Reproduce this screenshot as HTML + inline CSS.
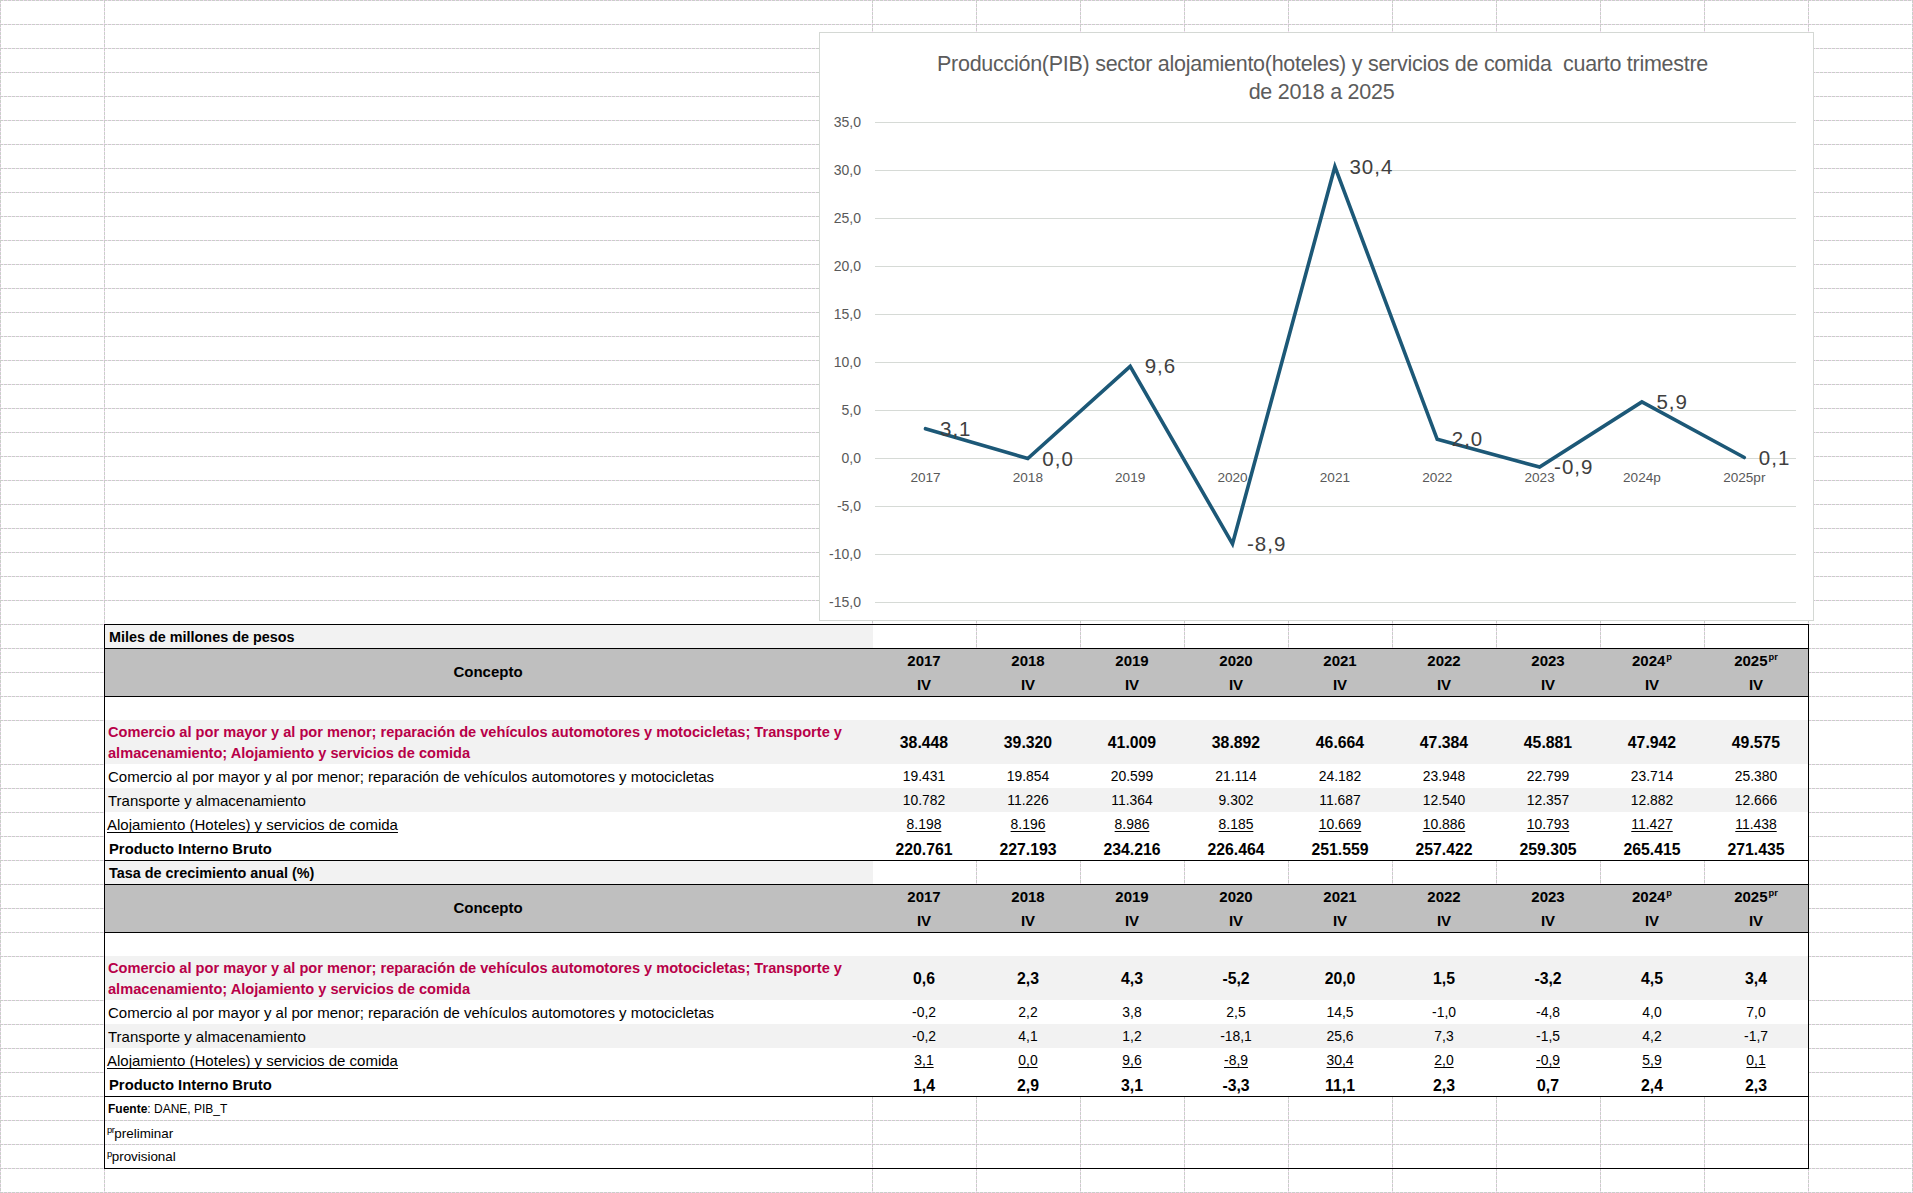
<!DOCTYPE html><html><head><meta charset="utf-8"><style>
html,body{margin:0;padding:0;background:#fff;} body{width:1913px;height:1193px;position:relative;overflow:hidden;font-family:"Liberation Sans", sans-serif;color:#000;}
div{position:absolute;}
.t{white-space:pre;}
.hl{height:1px;background:repeating-linear-gradient(90deg,#c9cfc9 0 3px,#f4d6f4 3px 4px);}
.vl{width:1px;background:repeating-linear-gradient(180deg,#c9cfc9 0 3px,#f4d6f4 3px 4px);}
.b{background:#000;}
.u{text-decoration:underline;text-decoration-thickness:1px;text-underline-offset:2px;text-decoration-skip-ink:none;}
</style></head><body>
<div class="hl" style="left:0;top:0px;width:1913px"></div>
<div class="hl" style="left:0;top:24px;width:1913px"></div>
<div class="hl" style="left:0;top:48px;width:1913px"></div>
<div class="hl" style="left:0;top:72px;width:1913px"></div>
<div class="hl" style="left:0;top:96px;width:1913px"></div>
<div class="hl" style="left:0;top:120px;width:1913px"></div>
<div class="hl" style="left:0;top:144px;width:1913px"></div>
<div class="hl" style="left:0;top:168px;width:1913px"></div>
<div class="hl" style="left:0;top:192px;width:1913px"></div>
<div class="hl" style="left:0;top:216px;width:1913px"></div>
<div class="hl" style="left:0;top:240px;width:1913px"></div>
<div class="hl" style="left:0;top:264px;width:1913px"></div>
<div class="hl" style="left:0;top:288px;width:1913px"></div>
<div class="hl" style="left:0;top:312px;width:1913px"></div>
<div class="hl" style="left:0;top:336px;width:1913px"></div>
<div class="hl" style="left:0;top:360px;width:1913px"></div>
<div class="hl" style="left:0;top:384px;width:1913px"></div>
<div class="hl" style="left:0;top:408px;width:1913px"></div>
<div class="hl" style="left:0;top:432px;width:1913px"></div>
<div class="hl" style="left:0;top:456px;width:1913px"></div>
<div class="hl" style="left:0;top:480px;width:1913px"></div>
<div class="hl" style="left:0;top:504px;width:1913px"></div>
<div class="hl" style="left:0;top:528px;width:1913px"></div>
<div class="hl" style="left:0;top:552px;width:1913px"></div>
<div class="hl" style="left:0;top:576px;width:1913px"></div>
<div class="hl" style="left:0;top:600px;width:1913px"></div>
<div class="hl" style="left:0;top:624px;width:1913px"></div>
<div class="hl" style="left:0;top:648px;width:1913px"></div>
<div class="hl" style="left:0;top:672px;width:1913px"></div>
<div class="hl" style="left:0;top:696px;width:1913px"></div>
<div class="hl" style="left:0;top:720px;width:1913px"></div>
<div class="hl" style="left:0;top:764px;width:1913px"></div>
<div class="hl" style="left:0;top:788px;width:1913px"></div>
<div class="hl" style="left:0;top:812px;width:1913px"></div>
<div class="hl" style="left:0;top:836px;width:1913px"></div>
<div class="hl" style="left:0;top:860px;width:1913px"></div>
<div class="hl" style="left:0;top:884px;width:1913px"></div>
<div class="hl" style="left:0;top:908px;width:1913px"></div>
<div class="hl" style="left:0;top:932px;width:1913px"></div>
<div class="hl" style="left:0;top:956px;width:1913px"></div>
<div class="hl" style="left:0;top:1000px;width:1913px"></div>
<div class="hl" style="left:0;top:1024px;width:1913px"></div>
<div class="hl" style="left:0;top:1048px;width:1913px"></div>
<div class="hl" style="left:0;top:1072px;width:1913px"></div>
<div class="hl" style="left:0;top:1096px;width:1913px"></div>
<div class="hl" style="left:0;top:1120px;width:1913px"></div>
<div class="hl" style="left:0;top:1144px;width:1913px"></div>
<div class="hl" style="left:0;top:1168px;width:1913px"></div>
<div class="hl" style="left:0;top:1192px;width:1913px"></div>
<div class="vl" style="left:0px;top:0;height:1193px"></div>
<div class="vl" style="left:104px;top:0;height:1193px"></div>
<div class="vl" style="left:872px;top:0;height:1193px"></div>
<div class="vl" style="left:976px;top:0;height:1193px"></div>
<div class="vl" style="left:1080px;top:0;height:1193px"></div>
<div class="vl" style="left:1184px;top:0;height:1193px"></div>
<div class="vl" style="left:1288px;top:0;height:1193px"></div>
<div class="vl" style="left:1392px;top:0;height:1193px"></div>
<div class="vl" style="left:1496px;top:0;height:1193px"></div>
<div class="vl" style="left:1600px;top:0;height:1193px"></div>
<div class="vl" style="left:1704px;top:0;height:1193px"></div>
<div class="vl" style="left:1808px;top:0;height:1193px"></div>
<div class="vl" style="left:1912px;top:0;height:1193px"></div>
<style>sup{font-size:62%;vertical-align:0;position:relative;top:-0.68em;margin-left:1px;} sup.s2{font-size:70%;top:-0.5em;letter-spacing:-0.5px;margin-left:0}</style>
<div style="left:104px;top:624px;width:769px;height:24px;background:#f2f2f2;"></div>
<div style="left:104px;top:648px;width:1704px;height:48px;background:#bfbfbf;"></div>
<div style="left:104px;top:696px;width:1704px;height:24px;background:#fff;"></div>
<div style="left:104px;top:720px;width:1704px;height:44px;background:#f2f2f2;"></div>
<div style="left:104px;top:764px;width:1704px;height:24px;background:#fff;"></div>
<div style="left:104px;top:788px;width:1704px;height:24px;background:#f2f2f2;"></div>
<div style="left:104px;top:812px;width:1704px;height:48px;background:#fff;"></div>
<div class="t" style="left:109px;top:629.61px;font-size:14.4px;line-height:14.4px;font-weight:bold;color:#000;">Miles de millones de pesos</div>
<div class="t" style="left:104px;top:664.10px;font-size:15px;line-height:15px;font-weight:bold;color:#000;width:768px;text-align:center;">Concepto</div>
<div class="t" style="left:872px;top:652.90px;font-size:15px;line-height:15px;font-weight:bold;color:#000;width:104px;text-align:center;">2017</div>
<div class="t" style="left:872px;top:676.80px;font-size:15px;line-height:15px;font-weight:bold;color:#000;width:104px;text-align:center;">IV</div>
<div class="t" style="left:976px;top:652.90px;font-size:15px;line-height:15px;font-weight:bold;color:#000;width:104px;text-align:center;">2018</div>
<div class="t" style="left:976px;top:676.80px;font-size:15px;line-height:15px;font-weight:bold;color:#000;width:104px;text-align:center;">IV</div>
<div class="t" style="left:1080px;top:652.90px;font-size:15px;line-height:15px;font-weight:bold;color:#000;width:104px;text-align:center;">2019</div>
<div class="t" style="left:1080px;top:676.80px;font-size:15px;line-height:15px;font-weight:bold;color:#000;width:104px;text-align:center;">IV</div>
<div class="t" style="left:1184px;top:652.90px;font-size:15px;line-height:15px;font-weight:bold;color:#000;width:104px;text-align:center;">2020</div>
<div class="t" style="left:1184px;top:676.80px;font-size:15px;line-height:15px;font-weight:bold;color:#000;width:104px;text-align:center;">IV</div>
<div class="t" style="left:1288px;top:652.90px;font-size:15px;line-height:15px;font-weight:bold;color:#000;width:104px;text-align:center;">2021</div>
<div class="t" style="left:1288px;top:676.80px;font-size:15px;line-height:15px;font-weight:bold;color:#000;width:104px;text-align:center;">IV</div>
<div class="t" style="left:1392px;top:652.90px;font-size:15px;line-height:15px;font-weight:bold;color:#000;width:104px;text-align:center;">2022</div>
<div class="t" style="left:1392px;top:676.80px;font-size:15px;line-height:15px;font-weight:bold;color:#000;width:104px;text-align:center;">IV</div>
<div class="t" style="left:1496px;top:652.90px;font-size:15px;line-height:15px;font-weight:bold;color:#000;width:104px;text-align:center;">2023</div>
<div class="t" style="left:1496px;top:676.80px;font-size:15px;line-height:15px;font-weight:bold;color:#000;width:104px;text-align:center;">IV</div>
<div class="t" style="left:1600px;top:652.90px;font-size:15px;line-height:15px;font-weight:bold;color:#000;width:104px;text-align:center;">2024<sup>p</sup></div>
<div class="t" style="left:1600px;top:676.80px;font-size:15px;line-height:15px;font-weight:bold;color:#000;width:104px;text-align:center;">IV</div>
<div class="t" style="left:1704px;top:652.90px;font-size:15px;line-height:15px;font-weight:bold;color:#000;width:104px;text-align:center;">2025<sup>pr</sup></div>
<div class="t" style="left:1704px;top:676.80px;font-size:15px;line-height:15px;font-weight:bold;color:#000;width:104px;text-align:center;">IV</div>
<div class="t" style="left:108px;top:724.94px;font-size:14.6px;line-height:14.6px;font-weight:bold;color:#b80048;">Comercio al por mayor y al por menor; reparación de vehículos automotores y motocicletas; Transporte y</div>
<div class="t" style="left:108px;top:746.24px;font-size:14.6px;line-height:14.6px;font-weight:bold;color:#b80048;">almacenamiento; Alojamiento y servicios de comida</div>
<div class="t" style="left:108px;top:768.90px;font-size:15px;line-height:15px;font-weight:normal;color:#000;">Comercio al por mayor y al por menor; reparación de vehículos automotores y motocicletas</div>
<div class="t" style="left:108px;top:792.90px;font-size:15px;line-height:15px;font-weight:normal;color:#000;">Transporte y almacenamiento</div>
<div class="t u" style="left:107px;top:816.90px;font-size:15px;line-height:15px;font-weight:normal;color:#000;">Alojamiento (Hoteles) y servicios de comida</div>
<div class="t" style="left:109px;top:841.87px;font-size:14.8px;line-height:14.8px;font-weight:bold;color:#000;">Producto Interno Bruto</div>
<div class="t" style="left:872px;top:734.93px;font-size:15.8px;line-height:15.8px;font-weight:bold;color:#000;width:104px;text-align:center;">38.448</div>
<div class="t" style="left:872px;top:769.83px;font-size:13.9px;line-height:13.9px;font-weight:normal;color:#000;width:104px;text-align:center;">19.431</div>
<div class="t" style="left:872px;top:793.83px;font-size:13.9px;line-height:13.9px;font-weight:normal;color:#000;width:104px;text-align:center;">10.782</div>
<div style="left:872px;top:812px;width:104px;height:24px;text-align:center"><span class="t u" style="position:absolute;left:50%;transform:translateX(-50%);top:5.83px;font-size:13.9px;line-height:13.9px">8.198</span></div>
<div class="t" style="left:872px;top:841.63px;font-size:15.8px;line-height:15.8px;font-weight:bold;color:#000;width:104px;text-align:center;">220.761</div>
<div class="t" style="left:976px;top:734.93px;font-size:15.8px;line-height:15.8px;font-weight:bold;color:#000;width:104px;text-align:center;">39.320</div>
<div class="t" style="left:976px;top:769.83px;font-size:13.9px;line-height:13.9px;font-weight:normal;color:#000;width:104px;text-align:center;">19.854</div>
<div class="t" style="left:976px;top:793.83px;font-size:13.9px;line-height:13.9px;font-weight:normal;color:#000;width:104px;text-align:center;">11.226</div>
<div style="left:976px;top:812px;width:104px;height:24px;text-align:center"><span class="t u" style="position:absolute;left:50%;transform:translateX(-50%);top:5.83px;font-size:13.9px;line-height:13.9px">8.196</span></div>
<div class="t" style="left:976px;top:841.63px;font-size:15.8px;line-height:15.8px;font-weight:bold;color:#000;width:104px;text-align:center;">227.193</div>
<div class="t" style="left:1080px;top:734.93px;font-size:15.8px;line-height:15.8px;font-weight:bold;color:#000;width:104px;text-align:center;">41.009</div>
<div class="t" style="left:1080px;top:769.83px;font-size:13.9px;line-height:13.9px;font-weight:normal;color:#000;width:104px;text-align:center;">20.599</div>
<div class="t" style="left:1080px;top:793.83px;font-size:13.9px;line-height:13.9px;font-weight:normal;color:#000;width:104px;text-align:center;">11.364</div>
<div style="left:1080px;top:812px;width:104px;height:24px;text-align:center"><span class="t u" style="position:absolute;left:50%;transform:translateX(-50%);top:5.83px;font-size:13.9px;line-height:13.9px">8.986</span></div>
<div class="t" style="left:1080px;top:841.63px;font-size:15.8px;line-height:15.8px;font-weight:bold;color:#000;width:104px;text-align:center;">234.216</div>
<div class="t" style="left:1184px;top:734.93px;font-size:15.8px;line-height:15.8px;font-weight:bold;color:#000;width:104px;text-align:center;">38.892</div>
<div class="t" style="left:1184px;top:769.83px;font-size:13.9px;line-height:13.9px;font-weight:normal;color:#000;width:104px;text-align:center;">21.114</div>
<div class="t" style="left:1184px;top:793.83px;font-size:13.9px;line-height:13.9px;font-weight:normal;color:#000;width:104px;text-align:center;">9.302</div>
<div style="left:1184px;top:812px;width:104px;height:24px;text-align:center"><span class="t u" style="position:absolute;left:50%;transform:translateX(-50%);top:5.83px;font-size:13.9px;line-height:13.9px">8.185</span></div>
<div class="t" style="left:1184px;top:841.63px;font-size:15.8px;line-height:15.8px;font-weight:bold;color:#000;width:104px;text-align:center;">226.464</div>
<div class="t" style="left:1288px;top:734.93px;font-size:15.8px;line-height:15.8px;font-weight:bold;color:#000;width:104px;text-align:center;">46.664</div>
<div class="t" style="left:1288px;top:769.83px;font-size:13.9px;line-height:13.9px;font-weight:normal;color:#000;width:104px;text-align:center;">24.182</div>
<div class="t" style="left:1288px;top:793.83px;font-size:13.9px;line-height:13.9px;font-weight:normal;color:#000;width:104px;text-align:center;">11.687</div>
<div style="left:1288px;top:812px;width:104px;height:24px;text-align:center"><span class="t u" style="position:absolute;left:50%;transform:translateX(-50%);top:5.83px;font-size:13.9px;line-height:13.9px">10.669</span></div>
<div class="t" style="left:1288px;top:841.63px;font-size:15.8px;line-height:15.8px;font-weight:bold;color:#000;width:104px;text-align:center;">251.559</div>
<div class="t" style="left:1392px;top:734.93px;font-size:15.8px;line-height:15.8px;font-weight:bold;color:#000;width:104px;text-align:center;">47.384</div>
<div class="t" style="left:1392px;top:769.83px;font-size:13.9px;line-height:13.9px;font-weight:normal;color:#000;width:104px;text-align:center;">23.948</div>
<div class="t" style="left:1392px;top:793.83px;font-size:13.9px;line-height:13.9px;font-weight:normal;color:#000;width:104px;text-align:center;">12.540</div>
<div style="left:1392px;top:812px;width:104px;height:24px;text-align:center"><span class="t u" style="position:absolute;left:50%;transform:translateX(-50%);top:5.83px;font-size:13.9px;line-height:13.9px">10.886</span></div>
<div class="t" style="left:1392px;top:841.63px;font-size:15.8px;line-height:15.8px;font-weight:bold;color:#000;width:104px;text-align:center;">257.422</div>
<div class="t" style="left:1496px;top:734.93px;font-size:15.8px;line-height:15.8px;font-weight:bold;color:#000;width:104px;text-align:center;">45.881</div>
<div class="t" style="left:1496px;top:769.83px;font-size:13.9px;line-height:13.9px;font-weight:normal;color:#000;width:104px;text-align:center;">22.799</div>
<div class="t" style="left:1496px;top:793.83px;font-size:13.9px;line-height:13.9px;font-weight:normal;color:#000;width:104px;text-align:center;">12.357</div>
<div style="left:1496px;top:812px;width:104px;height:24px;text-align:center"><span class="t u" style="position:absolute;left:50%;transform:translateX(-50%);top:5.83px;font-size:13.9px;line-height:13.9px">10.793</span></div>
<div class="t" style="left:1496px;top:841.63px;font-size:15.8px;line-height:15.8px;font-weight:bold;color:#000;width:104px;text-align:center;">259.305</div>
<div class="t" style="left:1600px;top:734.93px;font-size:15.8px;line-height:15.8px;font-weight:bold;color:#000;width:104px;text-align:center;">47.942</div>
<div class="t" style="left:1600px;top:769.83px;font-size:13.9px;line-height:13.9px;font-weight:normal;color:#000;width:104px;text-align:center;">23.714</div>
<div class="t" style="left:1600px;top:793.83px;font-size:13.9px;line-height:13.9px;font-weight:normal;color:#000;width:104px;text-align:center;">12.882</div>
<div style="left:1600px;top:812px;width:104px;height:24px;text-align:center"><span class="t u" style="position:absolute;left:50%;transform:translateX(-50%);top:5.83px;font-size:13.9px;line-height:13.9px">11.427</span></div>
<div class="t" style="left:1600px;top:841.63px;font-size:15.8px;line-height:15.8px;font-weight:bold;color:#000;width:104px;text-align:center;">265.415</div>
<div class="t" style="left:1704px;top:734.93px;font-size:15.8px;line-height:15.8px;font-weight:bold;color:#000;width:104px;text-align:center;">49.575</div>
<div class="t" style="left:1704px;top:769.83px;font-size:13.9px;line-height:13.9px;font-weight:normal;color:#000;width:104px;text-align:center;">25.380</div>
<div class="t" style="left:1704px;top:793.83px;font-size:13.9px;line-height:13.9px;font-weight:normal;color:#000;width:104px;text-align:center;">12.666</div>
<div style="left:1704px;top:812px;width:104px;height:24px;text-align:center"><span class="t u" style="position:absolute;left:50%;transform:translateX(-50%);top:5.83px;font-size:13.9px;line-height:13.9px">11.438</span></div>
<div class="t" style="left:1704px;top:841.63px;font-size:15.8px;line-height:15.8px;font-weight:bold;color:#000;width:104px;text-align:center;">271.435</div>
<div style="left:104px;top:624px;width:1705px;height:1px;background:#000;"></div>
<div style="left:104px;top:648px;width:1705px;height:1px;background:#000;"></div>
<div style="left:104px;top:696px;width:1705px;height:1px;background:#000;"></div>
<div style="left:104px;top:624px;width:1px;height:236px;background:#000;"></div>
<div style="left:1808px;top:624px;width:1px;height:236px;background:#000;"></div>
<div style="left:104px;top:860px;width:769px;height:24px;background:#f2f2f2;"></div>
<div style="left:104px;top:884px;width:1704px;height:48px;background:#bfbfbf;"></div>
<div style="left:104px;top:932px;width:1704px;height:24px;background:#fff;"></div>
<div style="left:104px;top:956px;width:1704px;height:44px;background:#f2f2f2;"></div>
<div style="left:104px;top:1000px;width:1704px;height:24px;background:#fff;"></div>
<div style="left:104px;top:1024px;width:1704px;height:24px;background:#f2f2f2;"></div>
<div style="left:104px;top:1048px;width:1704px;height:48px;background:#fff;"></div>
<div class="t" style="left:109px;top:865.61px;font-size:14.4px;line-height:14.4px;font-weight:bold;color:#000;">Tasa de crecimiento anual (%)</div>
<div class="t" style="left:104px;top:900.10px;font-size:15px;line-height:15px;font-weight:bold;color:#000;width:768px;text-align:center;">Concepto</div>
<div class="t" style="left:872px;top:888.90px;font-size:15px;line-height:15px;font-weight:bold;color:#000;width:104px;text-align:center;">2017</div>
<div class="t" style="left:872px;top:912.80px;font-size:15px;line-height:15px;font-weight:bold;color:#000;width:104px;text-align:center;">IV</div>
<div class="t" style="left:976px;top:888.90px;font-size:15px;line-height:15px;font-weight:bold;color:#000;width:104px;text-align:center;">2018</div>
<div class="t" style="left:976px;top:912.80px;font-size:15px;line-height:15px;font-weight:bold;color:#000;width:104px;text-align:center;">IV</div>
<div class="t" style="left:1080px;top:888.90px;font-size:15px;line-height:15px;font-weight:bold;color:#000;width:104px;text-align:center;">2019</div>
<div class="t" style="left:1080px;top:912.80px;font-size:15px;line-height:15px;font-weight:bold;color:#000;width:104px;text-align:center;">IV</div>
<div class="t" style="left:1184px;top:888.90px;font-size:15px;line-height:15px;font-weight:bold;color:#000;width:104px;text-align:center;">2020</div>
<div class="t" style="left:1184px;top:912.80px;font-size:15px;line-height:15px;font-weight:bold;color:#000;width:104px;text-align:center;">IV</div>
<div class="t" style="left:1288px;top:888.90px;font-size:15px;line-height:15px;font-weight:bold;color:#000;width:104px;text-align:center;">2021</div>
<div class="t" style="left:1288px;top:912.80px;font-size:15px;line-height:15px;font-weight:bold;color:#000;width:104px;text-align:center;">IV</div>
<div class="t" style="left:1392px;top:888.90px;font-size:15px;line-height:15px;font-weight:bold;color:#000;width:104px;text-align:center;">2022</div>
<div class="t" style="left:1392px;top:912.80px;font-size:15px;line-height:15px;font-weight:bold;color:#000;width:104px;text-align:center;">IV</div>
<div class="t" style="left:1496px;top:888.90px;font-size:15px;line-height:15px;font-weight:bold;color:#000;width:104px;text-align:center;">2023</div>
<div class="t" style="left:1496px;top:912.80px;font-size:15px;line-height:15px;font-weight:bold;color:#000;width:104px;text-align:center;">IV</div>
<div class="t" style="left:1600px;top:888.90px;font-size:15px;line-height:15px;font-weight:bold;color:#000;width:104px;text-align:center;">2024<sup>p</sup></div>
<div class="t" style="left:1600px;top:912.80px;font-size:15px;line-height:15px;font-weight:bold;color:#000;width:104px;text-align:center;">IV</div>
<div class="t" style="left:1704px;top:888.90px;font-size:15px;line-height:15px;font-weight:bold;color:#000;width:104px;text-align:center;">2025<sup>pr</sup></div>
<div class="t" style="left:1704px;top:912.80px;font-size:15px;line-height:15px;font-weight:bold;color:#000;width:104px;text-align:center;">IV</div>
<div class="t" style="left:108px;top:960.94px;font-size:14.6px;line-height:14.6px;font-weight:bold;color:#b80048;">Comercio al por mayor y al por menor; reparación de vehículos automotores y motocicletas; Transporte y</div>
<div class="t" style="left:108px;top:982.24px;font-size:14.6px;line-height:14.6px;font-weight:bold;color:#b80048;">almacenamiento; Alojamiento y servicios de comida</div>
<div class="t" style="left:108px;top:1004.90px;font-size:15px;line-height:15px;font-weight:normal;color:#000;">Comercio al por mayor y al por menor; reparación de vehículos automotores y motocicletas</div>
<div class="t" style="left:108px;top:1028.90px;font-size:15px;line-height:15px;font-weight:normal;color:#000;">Transporte y almacenamiento</div>
<div class="t u" style="left:107px;top:1052.90px;font-size:15px;line-height:15px;font-weight:normal;color:#000;">Alojamiento (Hoteles) y servicios de comida</div>
<div class="t" style="left:109px;top:1077.87px;font-size:14.8px;line-height:14.8px;font-weight:bold;color:#000;">Producto Interno Bruto</div>
<div class="t" style="left:872px;top:970.93px;font-size:15.8px;line-height:15.8px;font-weight:bold;color:#000;width:104px;text-align:center;">0,6</div>
<div class="t" style="left:872px;top:1005.83px;font-size:13.9px;line-height:13.9px;font-weight:normal;color:#000;width:104px;text-align:center;">-0,2</div>
<div class="t" style="left:872px;top:1029.83px;font-size:13.9px;line-height:13.9px;font-weight:normal;color:#000;width:104px;text-align:center;">-0,2</div>
<div style="left:872px;top:1048px;width:104px;height:24px;text-align:center"><span class="t u" style="position:absolute;left:50%;transform:translateX(-50%);top:5.83px;font-size:13.9px;line-height:13.9px">3,1</span></div>
<div class="t" style="left:872px;top:1077.63px;font-size:15.8px;line-height:15.8px;font-weight:bold;color:#000;width:104px;text-align:center;">1,4</div>
<div class="t" style="left:976px;top:970.93px;font-size:15.8px;line-height:15.8px;font-weight:bold;color:#000;width:104px;text-align:center;">2,3</div>
<div class="t" style="left:976px;top:1005.83px;font-size:13.9px;line-height:13.9px;font-weight:normal;color:#000;width:104px;text-align:center;">2,2</div>
<div class="t" style="left:976px;top:1029.83px;font-size:13.9px;line-height:13.9px;font-weight:normal;color:#000;width:104px;text-align:center;">4,1</div>
<div style="left:976px;top:1048px;width:104px;height:24px;text-align:center"><span class="t u" style="position:absolute;left:50%;transform:translateX(-50%);top:5.83px;font-size:13.9px;line-height:13.9px">0,0</span></div>
<div class="t" style="left:976px;top:1077.63px;font-size:15.8px;line-height:15.8px;font-weight:bold;color:#000;width:104px;text-align:center;">2,9</div>
<div class="t" style="left:1080px;top:970.93px;font-size:15.8px;line-height:15.8px;font-weight:bold;color:#000;width:104px;text-align:center;">4,3</div>
<div class="t" style="left:1080px;top:1005.83px;font-size:13.9px;line-height:13.9px;font-weight:normal;color:#000;width:104px;text-align:center;">3,8</div>
<div class="t" style="left:1080px;top:1029.83px;font-size:13.9px;line-height:13.9px;font-weight:normal;color:#000;width:104px;text-align:center;">1,2</div>
<div style="left:1080px;top:1048px;width:104px;height:24px;text-align:center"><span class="t u" style="position:absolute;left:50%;transform:translateX(-50%);top:5.83px;font-size:13.9px;line-height:13.9px">9,6</span></div>
<div class="t" style="left:1080px;top:1077.63px;font-size:15.8px;line-height:15.8px;font-weight:bold;color:#000;width:104px;text-align:center;">3,1</div>
<div class="t" style="left:1184px;top:970.93px;font-size:15.8px;line-height:15.8px;font-weight:bold;color:#000;width:104px;text-align:center;">-5,2</div>
<div class="t" style="left:1184px;top:1005.83px;font-size:13.9px;line-height:13.9px;font-weight:normal;color:#000;width:104px;text-align:center;">2,5</div>
<div class="t" style="left:1184px;top:1029.83px;font-size:13.9px;line-height:13.9px;font-weight:normal;color:#000;width:104px;text-align:center;">-18,1</div>
<div style="left:1184px;top:1048px;width:104px;height:24px;text-align:center"><span class="t u" style="position:absolute;left:50%;transform:translateX(-50%);top:5.83px;font-size:13.9px;line-height:13.9px">-8,9</span></div>
<div class="t" style="left:1184px;top:1077.63px;font-size:15.8px;line-height:15.8px;font-weight:bold;color:#000;width:104px;text-align:center;">-3,3</div>
<div class="t" style="left:1288px;top:970.93px;font-size:15.8px;line-height:15.8px;font-weight:bold;color:#000;width:104px;text-align:center;">20,0</div>
<div class="t" style="left:1288px;top:1005.83px;font-size:13.9px;line-height:13.9px;font-weight:normal;color:#000;width:104px;text-align:center;">14,5</div>
<div class="t" style="left:1288px;top:1029.83px;font-size:13.9px;line-height:13.9px;font-weight:normal;color:#000;width:104px;text-align:center;">25,6</div>
<div style="left:1288px;top:1048px;width:104px;height:24px;text-align:center"><span class="t u" style="position:absolute;left:50%;transform:translateX(-50%);top:5.83px;font-size:13.9px;line-height:13.9px">30,4</span></div>
<div class="t" style="left:1288px;top:1077.63px;font-size:15.8px;line-height:15.8px;font-weight:bold;color:#000;width:104px;text-align:center;">11,1</div>
<div class="t" style="left:1392px;top:970.93px;font-size:15.8px;line-height:15.8px;font-weight:bold;color:#000;width:104px;text-align:center;">1,5</div>
<div class="t" style="left:1392px;top:1005.83px;font-size:13.9px;line-height:13.9px;font-weight:normal;color:#000;width:104px;text-align:center;">-1,0</div>
<div class="t" style="left:1392px;top:1029.83px;font-size:13.9px;line-height:13.9px;font-weight:normal;color:#000;width:104px;text-align:center;">7,3</div>
<div style="left:1392px;top:1048px;width:104px;height:24px;text-align:center"><span class="t u" style="position:absolute;left:50%;transform:translateX(-50%);top:5.83px;font-size:13.9px;line-height:13.9px">2,0</span></div>
<div class="t" style="left:1392px;top:1077.63px;font-size:15.8px;line-height:15.8px;font-weight:bold;color:#000;width:104px;text-align:center;">2,3</div>
<div class="t" style="left:1496px;top:970.93px;font-size:15.8px;line-height:15.8px;font-weight:bold;color:#000;width:104px;text-align:center;">-3,2</div>
<div class="t" style="left:1496px;top:1005.83px;font-size:13.9px;line-height:13.9px;font-weight:normal;color:#000;width:104px;text-align:center;">-4,8</div>
<div class="t" style="left:1496px;top:1029.83px;font-size:13.9px;line-height:13.9px;font-weight:normal;color:#000;width:104px;text-align:center;">-1,5</div>
<div style="left:1496px;top:1048px;width:104px;height:24px;text-align:center"><span class="t u" style="position:absolute;left:50%;transform:translateX(-50%);top:5.83px;font-size:13.9px;line-height:13.9px">-0,9</span></div>
<div class="t" style="left:1496px;top:1077.63px;font-size:15.8px;line-height:15.8px;font-weight:bold;color:#000;width:104px;text-align:center;">0,7</div>
<div class="t" style="left:1600px;top:970.93px;font-size:15.8px;line-height:15.8px;font-weight:bold;color:#000;width:104px;text-align:center;">4,5</div>
<div class="t" style="left:1600px;top:1005.83px;font-size:13.9px;line-height:13.9px;font-weight:normal;color:#000;width:104px;text-align:center;">4,0</div>
<div class="t" style="left:1600px;top:1029.83px;font-size:13.9px;line-height:13.9px;font-weight:normal;color:#000;width:104px;text-align:center;">4,2</div>
<div style="left:1600px;top:1048px;width:104px;height:24px;text-align:center"><span class="t u" style="position:absolute;left:50%;transform:translateX(-50%);top:5.83px;font-size:13.9px;line-height:13.9px">5,9</span></div>
<div class="t" style="left:1600px;top:1077.63px;font-size:15.8px;line-height:15.8px;font-weight:bold;color:#000;width:104px;text-align:center;">2,4</div>
<div class="t" style="left:1704px;top:970.93px;font-size:15.8px;line-height:15.8px;font-weight:bold;color:#000;width:104px;text-align:center;">3,4</div>
<div class="t" style="left:1704px;top:1005.83px;font-size:13.9px;line-height:13.9px;font-weight:normal;color:#000;width:104px;text-align:center;">7,0</div>
<div class="t" style="left:1704px;top:1029.83px;font-size:13.9px;line-height:13.9px;font-weight:normal;color:#000;width:104px;text-align:center;">-1,7</div>
<div style="left:1704px;top:1048px;width:104px;height:24px;text-align:center"><span class="t u" style="position:absolute;left:50%;transform:translateX(-50%);top:5.83px;font-size:13.9px;line-height:13.9px">0,1</span></div>
<div class="t" style="left:1704px;top:1077.63px;font-size:15.8px;line-height:15.8px;font-weight:bold;color:#000;width:104px;text-align:center;">2,3</div>
<div style="left:104px;top:860px;width:1705px;height:1px;background:#000;"></div>
<div style="left:104px;top:884px;width:1705px;height:1px;background:#000;"></div>
<div style="left:104px;top:932px;width:1705px;height:1px;background:#000;"></div>
<div style="left:104px;top:860px;width:1px;height:236px;background:#000;"></div>
<div style="left:1808px;top:860px;width:1px;height:236px;background:#000;"></div>
<div style="left:104px;top:1096px;width:1705px;height:1px;background:#000;"></div>
<div style="left:104px;top:1168px;width:1705px;height:1px;background:#000;"></div>
<div style="left:104px;top:1096px;width:1px;height:73px;background:#000;"></div>
<div style="left:1808px;top:1096px;width:1px;height:73px;background:#000;"></div>
<div class="t" style="left:108px;top:1103.04px;font-size:12.0px;line-height:12.0px;font-weight:normal;color:#000;"><b>Fuente</b>: DANE, PIB_T</div>
<div class="t" style="left:107px;top:1126.66px;font-size:13.4px;line-height:13.4px;font-weight:normal;color:#000;"><sup class="s2">pr</sup>preliminar</div>
<div class="t" style="left:107px;top:1150.46px;font-size:13.4px;line-height:13.4px;font-weight:normal;color:#000;"><sup class="s2">p</sup>provisional</div>
<div style="left:819px;top:32px;width:993px;height:587px;background:#fff;border:1px solid #d4d8d4;"></div>
<svg width="1913" height="1193" style="position:absolute;left:0;top:0"><line x1="875" y1="122.5" x2="1796" y2="122.5" stroke="#d6dad6" stroke-width="1"/><line x1="875" y1="170.5" x2="1796" y2="170.5" stroke="#d6dad6" stroke-width="1"/><line x1="875" y1="218.5" x2="1796" y2="218.5" stroke="#d6dad6" stroke-width="1"/><line x1="875" y1="266.5" x2="1796" y2="266.5" stroke="#d6dad6" stroke-width="1"/><line x1="875" y1="314.5" x2="1796" y2="314.5" stroke="#d6dad6" stroke-width="1"/><line x1="875" y1="362.5" x2="1796" y2="362.5" stroke="#d6dad6" stroke-width="1"/><line x1="875" y1="410.5" x2="1796" y2="410.5" stroke="#d6dad6" stroke-width="1"/><line x1="875" y1="458.5" x2="1796" y2="458.5" stroke="#d6dad6" stroke-width="1"/><line x1="875" y1="506.5" x2="1796" y2="506.5" stroke="#d6dad6" stroke-width="1"/><line x1="875" y1="554.5" x2="1796" y2="554.5" stroke="#d6dad6" stroke-width="1"/><line x1="875" y1="602.5" x2="1796" y2="602.5" stroke="#d6dad6" stroke-width="1"/><polyline fill="none" stroke="#1c5877" stroke-width="3.6" stroke-linejoin="miter" stroke-linecap="round" points="925.5,428.7 1027.8,458.5 1130.2,366.3 1232.5,543.9 1334.9,166.7 1437.2,439.3 1539.6,467.1 1641.9,401.9 1744.3,457.5"/></svg>
<div class="t" style="left:800px;top:114.85px;font-size:14px;line-height:14px;font-weight:normal;color:#595959;width:61px;text-align:right;">35,0</div>
<div class="t" style="left:800px;top:162.85px;font-size:14px;line-height:14px;font-weight:normal;color:#595959;width:61px;text-align:right;">30,0</div>
<div class="t" style="left:800px;top:210.85px;font-size:14px;line-height:14px;font-weight:normal;color:#595959;width:61px;text-align:right;">25,0</div>
<div class="t" style="left:800px;top:258.85px;font-size:14px;line-height:14px;font-weight:normal;color:#595959;width:61px;text-align:right;">20,0</div>
<div class="t" style="left:800px;top:306.85px;font-size:14px;line-height:14px;font-weight:normal;color:#595959;width:61px;text-align:right;">15,0</div>
<div class="t" style="left:800px;top:354.85px;font-size:14px;line-height:14px;font-weight:normal;color:#595959;width:61px;text-align:right;">10,0</div>
<div class="t" style="left:800px;top:402.85px;font-size:14px;line-height:14px;font-weight:normal;color:#595959;width:61px;text-align:right;">5,0</div>
<div class="t" style="left:800px;top:450.85px;font-size:14px;line-height:14px;font-weight:normal;color:#595959;width:61px;text-align:right;">0,0</div>
<div class="t" style="left:800px;top:498.85px;font-size:14px;line-height:14px;font-weight:normal;color:#595959;width:61px;text-align:right;">-5,0</div>
<div class="t" style="left:800px;top:546.85px;font-size:14px;line-height:14px;font-weight:normal;color:#595959;width:61px;text-align:right;">-10,0</div>
<div class="t" style="left:800px;top:594.85px;font-size:14px;line-height:14px;font-weight:normal;color:#595959;width:61px;text-align:right;">-15,0</div>
<div class="t" style="left:885.5px;top:470.69px;font-size:13.6px;line-height:13.6px;font-weight:normal;color:#595959;width:80px;text-align:center;">2017</div>
<div class="t" style="left:987.8499999999999px;top:470.69px;font-size:13.6px;line-height:13.6px;font-weight:normal;color:#595959;width:80px;text-align:center;">2018</div>
<div class="t" style="left:1090.2px;top:470.69px;font-size:13.6px;line-height:13.6px;font-weight:normal;color:#595959;width:80px;text-align:center;">2019</div>
<div class="t" style="left:1192.55px;top:470.69px;font-size:13.6px;line-height:13.6px;font-weight:normal;color:#595959;width:80px;text-align:center;">2020</div>
<div class="t" style="left:1294.9px;top:470.69px;font-size:13.6px;line-height:13.6px;font-weight:normal;color:#595959;width:80px;text-align:center;">2021</div>
<div class="t" style="left:1397.25px;top:470.69px;font-size:13.6px;line-height:13.6px;font-weight:normal;color:#595959;width:80px;text-align:center;">2022</div>
<div class="t" style="left:1499.6px;top:470.69px;font-size:13.6px;line-height:13.6px;font-weight:normal;color:#595959;width:80px;text-align:center;">2023</div>
<div class="t" style="left:1601.9499999999998px;top:470.69px;font-size:13.6px;line-height:13.6px;font-weight:normal;color:#595959;width:80px;text-align:center;">2024p</div>
<div class="t" style="left:1704.3px;top:470.69px;font-size:13.6px;line-height:13.6px;font-weight:normal;color:#595959;width:80px;text-align:center;">2025pr</div>
<div class="t" style="left:940.0px;top:418.79px;font-size:20.5px;line-height:20.5px;font-weight:normal;color:#404040;letter-spacing:1px;">3,1</div>
<div class="t" style="left:1042.35px;top:448.55px;font-size:20.5px;line-height:20.5px;font-weight:normal;color:#404040;letter-spacing:1px;">0,0</div>
<div class="t" style="left:1144.7px;top:356.39px;font-size:20.5px;line-height:20.5px;font-weight:normal;color:#404040;letter-spacing:1px;">9,6</div>
<div class="t" style="left:1247.05px;top:533.99px;font-size:20.5px;line-height:20.5px;font-weight:normal;color:#404040;letter-spacing:1px;">-8,9</div>
<div class="t" style="left:1349.4px;top:156.71px;font-size:20.5px;line-height:20.5px;font-weight:normal;color:#404040;letter-spacing:1px;">30,4</div>
<div class="t" style="left:1451.75px;top:429.35px;font-size:20.5px;line-height:20.5px;font-weight:normal;color:#404040;letter-spacing:1px;">2,0</div>
<div class="t" style="left:1554.1px;top:457.19px;font-size:20.5px;line-height:20.5px;font-weight:normal;color:#404040;letter-spacing:1px;">-0,9</div>
<div class="t" style="left:1656.4499999999998px;top:391.91px;font-size:20.5px;line-height:20.5px;font-weight:normal;color:#404040;letter-spacing:1px;">5,9</div>
<div class="t" style="left:1758.8px;top:447.59px;font-size:20.5px;line-height:20.5px;font-weight:normal;color:#404040;letter-spacing:1px;">0,1</div>
<div class="t" style="left:819px;top:53.80px;font-size:21.5px;line-height:21.5px;font-weight:normal;color:#5c5c5c;width:1007px;text-align:center;letter-spacing:-0.27px;">Producción(PIB) sector alojamiento(hoteles) y servicios de comida  cuarto trimestre</div>
<div class="t" style="left:819px;top:82.40px;font-size:21.5px;line-height:21.5px;font-weight:normal;color:#5c5c5c;width:1005px;text-align:center;letter-spacing:-0.27px;">de 2018 a 2025</div>
</body></html>
